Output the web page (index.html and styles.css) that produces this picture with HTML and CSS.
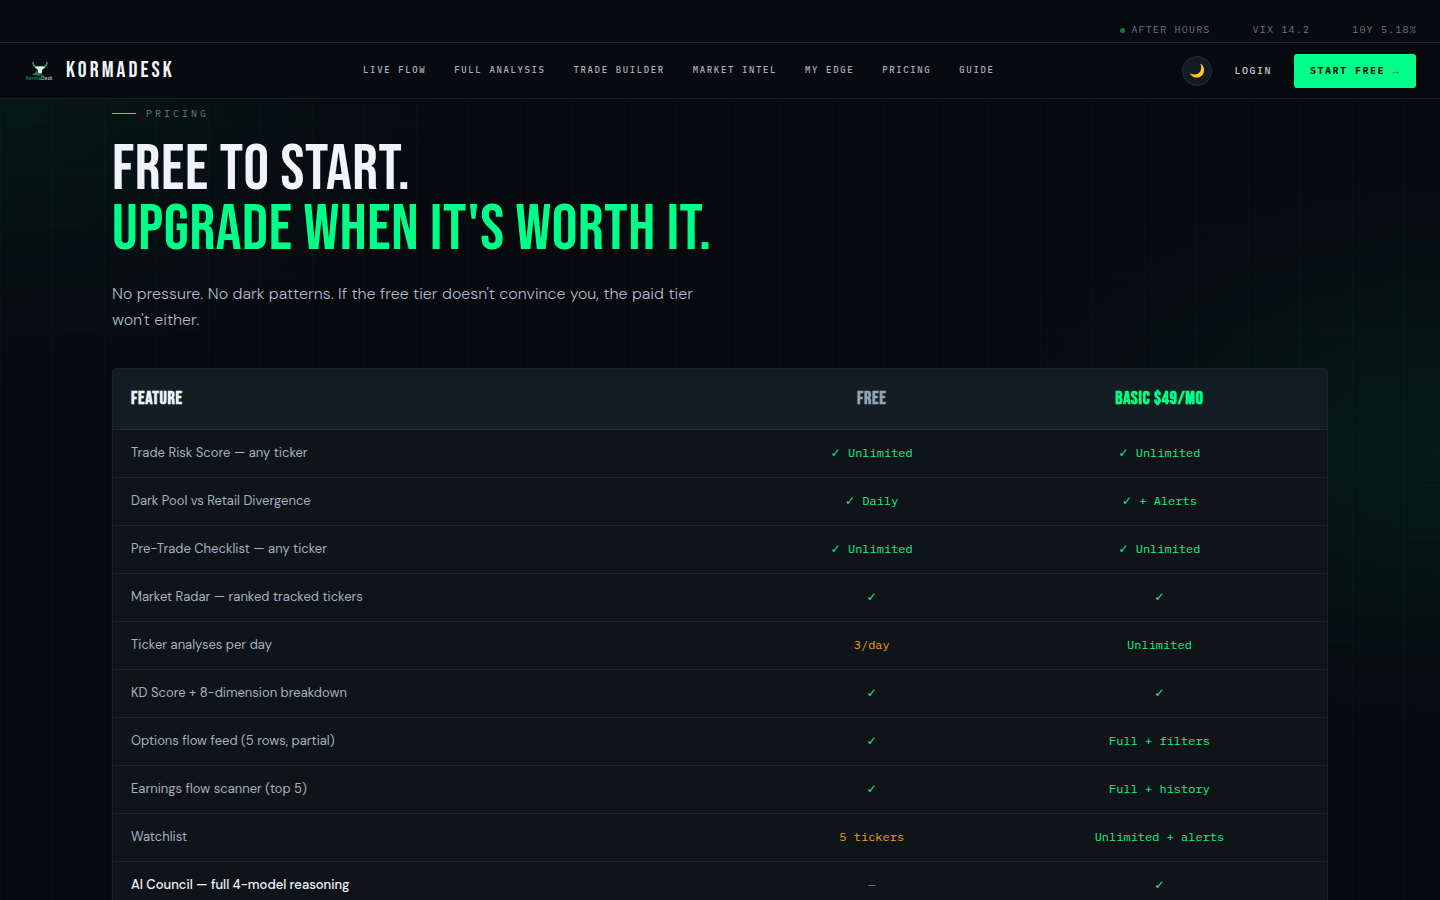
FILE: index.html
```html
<!DOCTYPE html>
<html lang="en">
<head>
<meta charset="utf-8">
<meta name="viewport" content="width=device-width, initial-scale=1">
<title>KormaDesk — Pricing</title>
<link rel="stylesheet" href="styles.css">
</head>
<body>
<header class="site-header">
  <div class="ticker">
    <span class="ticker-item ticker-status">AFTER HOURS</span>
    <span class="ticker-item">VIX 14.2</span>
    <span class="ticker-item">10Y 5.18%</span>
  </div>
  <div class="navbar">
    <a class="brand" href="#">
      <svg class="brand-mark" viewBox="0 0 32 32" aria-hidden="true">
        <path d="M9 7.500c.2 3.500 2.500 4.500 5 4.500h4c2.500 0 4.800-1 5-4.500" fill="none" stroke="#3f9c74" stroke-width="1.500" stroke-linecap="round"/>
        <path d="M10.500 12.500l3-1h5l3 1-3 1.700-.8 4.300h-3.400l-.8-4.300z" fill="#dcefe5"/>
        <path d="M8 19.500c2-.6 3.800-2.200 5-4.500l1 3.800c2.500.8 5.500 1 9.500.7-4.500 1.500-11 1.600-15.500 0z" fill="#1c7d52"/>
        <text class="mark-text" x="2" y="25"><tspan class="mark-green">Korma</tspan>Desk</text>
      </svg>
      <span class="brand-name">KORMADESK</span>
    </a>
    <nav class="menu" aria-label="Main">
      <a href="#">LIVE FLOW</a>
      <a href="#">FULL ANALYSIS</a>
      <a href="#">TRADE BUILDER</a>
      <a href="#">MARKET INTEL</a>
      <a href="#">MY EDGE</a>
      <a href="#">PRICING</a>
      <a href="#">GUIDE</a>
    </nav>
    <div class="actions">
      <button class="theme" type="button" aria-label="Toggle theme">🌙</button>
      <a class="login" href="#">LOGIN</a>
      <a class="cta" href="#">START FREE <span class="arrow">→</span></a>
    </div>
  </div>
</header>
<main class="pricing">
  <p class="eyebrow">PRICING</p>
  <h1 class="title">FREE TO START.<br><span class="accent">UPGRADE WHEN IT'S WORTH IT.</span></h1>
  <p class="lead">No pressure. No dark patterns. If the free tier doesn't convince you, the paid tier won't either.</p>
  <div class="table-card">
    <table class="plans">
      <colgroup><col class="col-feature"><col class="col-free"><col class="col-basic"></colgroup>
      <thead>
        <tr><th scope="col">FEATURE</th><th scope="col" class="free">FREE</th><th scope="col" class="basic">BASIC $49/MO</th></tr>
      </thead>
      <tbody>
        <tr><td>Trade Risk Score — any ticker</td><td class="yes"><span class="tick">✓</span> Unlimited</td><td class="yes"><span class="tick">✓</span> Unlimited</td></tr>
        <tr><td>Dark Pool vs Retail Divergence</td><td class="yes"><span class="tick">✓</span> Daily</td><td class="yes"><span class="tick">✓</span> + Alerts</td></tr>
        <tr><td>Pre-Trade Checklist — any ticker</td><td class="yes"><span class="tick">✓</span> Unlimited</td><td class="yes"><span class="tick">✓</span> Unlimited</td></tr>
        <tr><td>Market Radar — ranked tracked tickers</td><td class="yes"><span class="tick">✓</span></td><td class="yes"><span class="tick">✓</span></td></tr>
        <tr><td>Ticker analyses per day</td><td class="limited">3/day</td><td class="yes">Unlimited</td></tr>
        <tr><td>KD Score + 8-dimension breakdown</td><td class="yes"><span class="tick">✓</span></td><td class="yes"><span class="tick">✓</span></td></tr>
        <tr><td>Options flow feed (5 rows, partial)</td><td class="yes"><span class="tick">✓</span></td><td class="yes">Full + filters</td></tr>
        <tr><td>Earnings flow scanner (top 5)</td><td class="yes"><span class="tick">✓</span></td><td class="yes">Full + history</td></tr>
        <tr><td>Watchlist</td><td class="limited">5 tickers</td><td class="yes">Unlimited + alerts</td></tr>
        <tr><td class="strong">AI Council — full 4-model reasoning</td><td class="none">—</td><td class="yes"><span class="tick">✓</span></td></tr>
      </tbody>
    </table>
  </div>
</main>
</body>
</html>
```
FILE: styles.css
```css
:root {
  --bg: #06090e;
  --green: #00ff88;
  --text: #f0f4fa;
  --muted: #a3b1c2;
  --dim: #687787;
  --display: "Bebas Neue", "Roboto Condensed", Roboto, sans-serif;
  --body: "DM Sans", Inter, sans-serif;
  --mono: "IBM Plex Mono", "Liberation Mono", monospace;
}

* { box-sizing: border-box; }

html { background: var(--bg); }

body {
  margin: 0;
  height: 100vh;
  overflow-x: hidden;
  color: var(--text);
  font-family: var(--body);
  background:
    linear-gradient(rgba(0, 255, 136, 0.02) 1px, transparent 1px) 0 17px / 52px 52px,
    linear-gradient(90deg, rgba(0, 255, 136, 0.02) 1px, transparent 1px) 0 0 / 52px 52px,
    radial-gradient(ellipse 480px 300px at 0 90px, rgba(0, 255, 136, 0.06), transparent),
    radial-gradient(ellipse 480px 300px at 100% 450px, rgba(0, 255, 136, 0.07), transparent),
    var(--bg);
}

a { color: inherit; text-decoration: none; }

.site-header { background: #070a0f; }

.ticker {
  display: flex;
  justify-content: flex-end;
  align-items: flex-end;
  gap: 42px;
  height: 43px;
  padding: 0 23px 5px;
  border-bottom: 1px solid #0c2f27;
  color: var(--dim);
  font: 10px/14px var(--mono);
  letter-spacing: 0.12em;
}

.ticker-status { display: flex; align-items: center; gap: 6px; }

.ticker-status::before {
  content: "";
  width: 5px;
  height: 5px;
  border-radius: 50%;
  background: #0b7a48;
}

.navbar {
  display: flex;
  justify-content: space-between;
  align-items: center;
  height: 56px;
  padding: 0 24px;
  border-bottom: 1px solid #14201f;
}

.brand { display: flex; align-items: center; gap: 10px; }

.brand-mark { width: 32px; height: 32px; }

.mark-text { font: 500 5px var(--body); fill: #c3ccd2; }

.mark-green { fill: #1f9a5e; }

.brand-name {
  font: 22px/28px var(--display);
  letter-spacing: 0.14em;
}

.menu {
  display: flex;
  gap: 28px;
  padding-bottom: 2px;
  color: var(--muted);
  font: 500 9px/13px var(--mono);
  letter-spacing: 0.18em;
}

.actions {
  display: flex;
  justify-content: flex-end;
  align-items: center;
  gap: 22px;
  font: 500 10px/14px var(--mono);
  letter-spacing: 0.15em;
}

.theme {
  width: 30px;
  height: 30px;
  padding: 0;
  border: 1px solid #243039;
  border-radius: 50%;
  background: #141c23;
  font-size: 13px;
  line-height: 28px;
  text-align: center;
}

.login { color: #c2ccd8; }

.cta {
  padding: 10px 16px;
  border-radius: 3px;
  background: var(--green);
  color: #04120b;
  font-weight: 700;
}

.arrow { font-family: "Liberation Mono", monospace; line-height: 1; }

.pricing {
  max-width: 1280px;
  margin: 0 auto;
  padding: 8px 32px 0;
}

.eyebrow {
  display: flex;
  align-items: center;
  gap: 10px;
  margin: 0;
  color: var(--dim);
  font: 10px/13px var(--mono);
  letter-spacing: 0.3em;
}

.eyebrow::before {
  content: "";
  width: 24px;
  height: 1px;
  background: var(--green);
}

.title {
  margin: 20px 0 0;
  font: 64px/60px var(--display);
  letter-spacing: 0.01em;
}

.accent { color: var(--green); }

.lead {
  max-width: 600px;
  margin: 21px 0 0;
  color: #abb9ca;
  font-size: 16px;
  font-weight: 300;
  line-height: 26px;
}

.table-card {
  margin-top: 35px;
  border: 1px solid #1c242b;
  border-radius: 4px;
  overflow: hidden;
  background: #0f1418;
}

.plans {
  width: 100%;
  border-collapse: collapse;
  table-layout: fixed;
}

.col-feature { width: 52.6%; }
.col-free { width: 19.8%; }
.col-basic { width: 27.6%; }

.plans th {
  height: 60px;
  padding: 0 18px;
  background: #151d24;
  border-bottom: 1px solid #222b36;
  font: 700 18px/24px var(--display);
  letter-spacing: 0.04em;
}

.plans th:first-child { text-align: left; }
.plans .free { color: #94a3b5; }
.plans .basic { color: var(--green); }

.plans td {
  height: 48px;
  padding: 0 18px;
  border-bottom: 1px solid #1e2429;
  color: var(--muted);
  font-size: 13px;
  line-height: 20px;
}

.plans td:not(:first-child) {
  text-align: center;
  font-family: var(--mono);
  font-size: 12px;
}

.tick { font-family: "DejaVu Sans", sans-serif; }

.plans .yes { color: #0cf488; }
.plans .limited { color: #f0a020; }
.plans .none { color: var(--dim); }
.plans .strong { color: var(--text); font-weight: 500; }
```
